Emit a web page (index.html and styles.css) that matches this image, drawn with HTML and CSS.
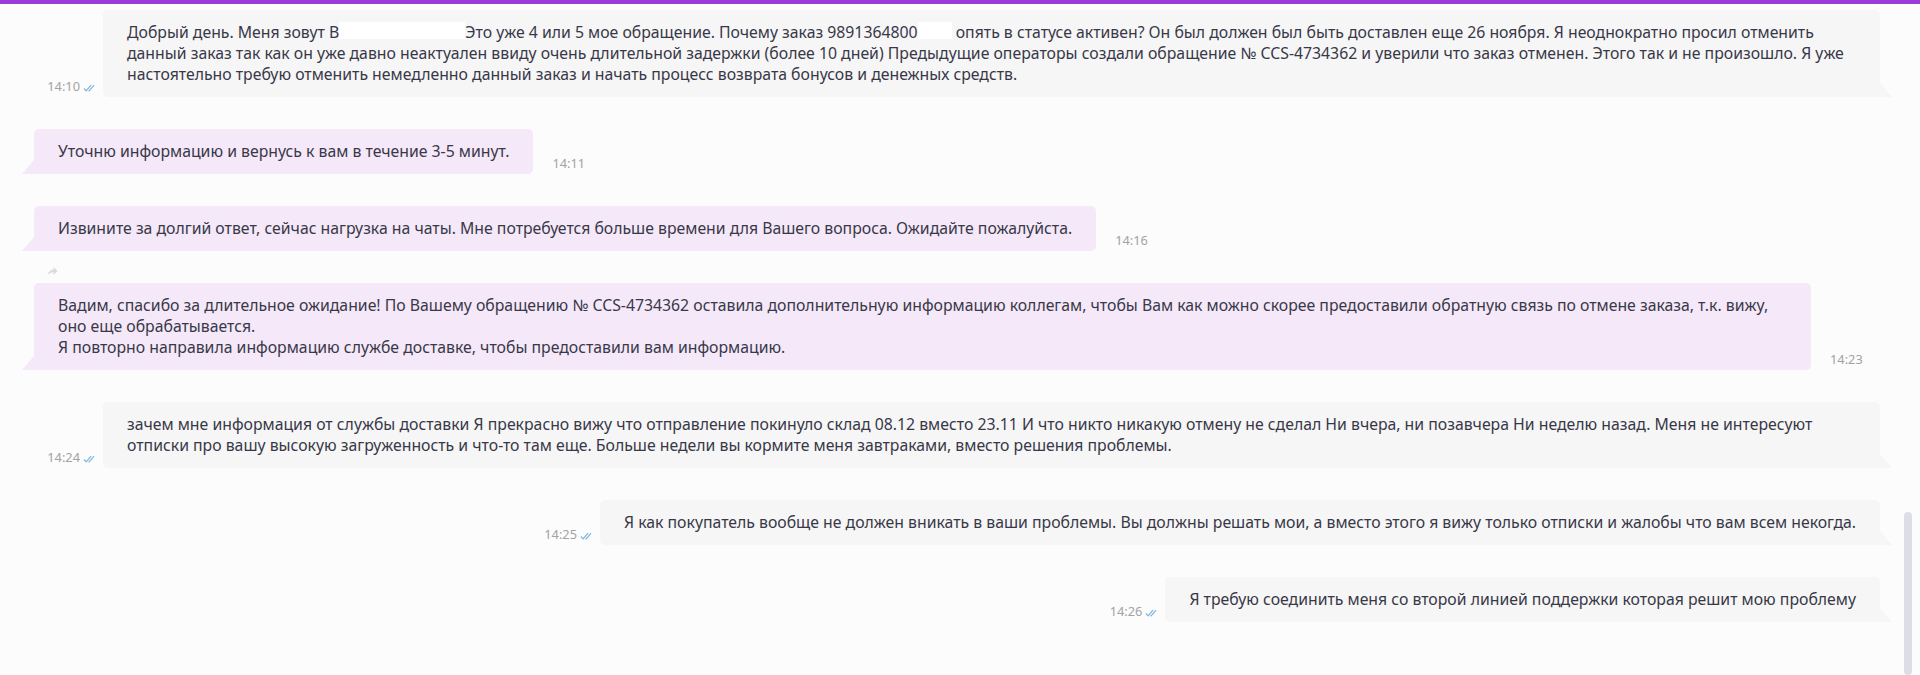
FILE: index.html
```html
<!DOCTYPE html>
<html lang="ru">
<head>
<meta charset="utf-8">
<title>Чат</title>
<link rel="stylesheet" href="styles.css">
</head>
<body>
<div class="topbar"></div>
<div class="chat">
  <div class="msg in">
    <div class="meta"><span class="time">14:10</span><svg class="check" viewBox="0 0 14 8" width="14" height="8"><path d="M1 4.5 L3.2 6.8 L8 1.2 M5.5 6.6 L6.2 6.8 L11 1.2" fill="none" stroke="#7ab6e2" stroke-width="1.2"/></svg></div>
    <div class="bubble wide">Добрый день. Меня зовут В<span class="redact r1"></span>Это уже 4 или 5 мое обращение. Почему заказ 9891364800<span class="redact r2"></span> опять в статусе активен? Он был должен был быть доставлен еще 26 ноября. Я неоднократно просил отменить<br>данный заказ так как он уже давно неактуален ввиду очень длительной задержки (более 10 дней) Предыдущие операторы создали обращение № CCS-4734362 и уверили что заказ отменен. Этого так и не произошло. Я уже<br>настоятельно требую отменить немедленно данный заказ и начать процесс возврата бонусов и денежных средств.</div>
  </div>
  <div class="msg out">
    <div class="bubble">Уточню информацию и вернусь к вам в течение 3-5 минут.</div>
    <div class="meta"><span class="time">14:11</span></div>
  </div>
  <div class="msg out">
    <div class="bubble">Извините за долгий ответ, сейчас нагрузка на чаты. Мне потребуется больше времени для Вашего вопроса. Ожидайте пожалуйста.</div>
    <div class="meta"><span class="time">14:16</span></div>
  </div>
  <div class="msg out">
    <svg class="fwd" viewBox="0 0 10 9" width="11" height="10"><path d="M0.5 8.5 C1 5 3.5 3.3 6 3.3 V0.8 L9.6 4.4 L6 8 V5.6 C3.6 5.6 1.8 6.6 0.5 8.5 Z" fill="#dadada"/></svg>
    <div class="bubble wide">Вадим, спасибо за длительное ожидание! По Вашему обращению № CCS-4734362 оставила дополнительную информацию коллегам, чтобы Вам как можно скорее предоставили обратную связь по отмене заказа, т.к. вижу,<br>оно еще обрабатывается.<br>Я повторно направила информацию службе доставке, чтобы предоставили вам информацию.</div>
    <div class="meta"><span class="time">14:23</span></div>
  </div>
  <div class="msg in">
    <div class="meta"><span class="time">14:24</span><svg class="check" viewBox="0 0 14 8" width="14" height="8"><path d="M1 4.5 L3.2 6.8 L8 1.2 M5.5 6.6 L6.2 6.8 L11 1.2" fill="none" stroke="#7ab6e2" stroke-width="1.2"/></svg></div>
    <div class="bubble wide">зачем мне информация от службы доставки Я прекрасно вижу что отправление покинуло склад 08.12 вместо 23.11 И что никто никакую отмену не сделал Ни вчера, ни позавчера Ни неделю назад. Меня не интересуют<br>отписки про вашу высокую загруженность и что-то там еще. Больше недели вы кормите меня завтраками, вместо решения проблемы.</div>
  </div>
  <div class="msg in">
    <div class="meta"><span class="time">14:25</span><svg class="check" viewBox="0 0 14 8" width="14" height="8"><path d="M1 4.5 L3.2 6.8 L8 1.2 M5.5 6.6 L6.2 6.8 L11 1.2" fill="none" stroke="#7ab6e2" stroke-width="1.2"/></svg></div>
    <div class="bubble">Я как покупатель вообще не должен вникать в ваши проблемы. Вы должны решать мои, а вместо этого я вижу только отписки и жалобы что вам всем некогда.</div>
  </div>
  <div class="msg in">
    <div class="meta"><span class="time">14:26</span><svg class="check" viewBox="0 0 14 8" width="14" height="8"><path d="M1 4.5 L3.2 6.8 L8 1.2 M5.5 6.6 L6.2 6.8 L11 1.2" fill="none" stroke="#7ab6e2" stroke-width="1.2"/></svg></div>
    <div class="bubble">Я требую соединить меня со второй линией поддержки которая решит мою проблему</div>
  </div>
</div>
<div class="scrollbar"></div>
</body>
</html>
```

FILE: styles.css
```css
html, body {
  margin: 0;
  height: 100%;
}
body {
  position: relative;
  overflow: hidden;
  background: #fcfcfc;
  font-family: "Noto Sans", "Open Sans", sans-serif;
  color: #383848;
}
.topbar {
  height: 4px;
  background: #9b3bd9;
}
.chat {
  display: flex;
  flex-direction: column;
  gap: 32px;
  padding: 6px 40px 0 34px;
}
.msg {
  position: relative;
  display: flex;
  align-items: flex-end;
}
.msg.in {
  justify-content: flex-end;
}
.msg.out {
  justify-content: flex-start;
}
.bubble {
  position: relative;
  box-sizing: border-box;
  max-width: 1777px;
  padding: 12px 24px;
  font-size: 15.8px;
  line-height: 21px;
  border-radius: 5px;
  white-space: nowrap;
}
.bubble.wide {
  width: 1777px;
}
.in .bubble {
  background: #f6f6f6;
  border-bottom-right-radius: 0;
}
.out .bubble {
  background: #f5e8f9;
  border-bottom-left-radius: 0;
}
.in .bubble::after {
  content: "";
  position: absolute;
  right: -12px;
  bottom: 0;
  border-left: 12px solid #f6f6f6;
  border-top: 14px solid transparent;
}
.out .bubble::after {
  content: "";
  position: absolute;
  left: -12px;
  bottom: 0;
  border-right: 12px solid #f5e8f9;
  border-top: 14px solid transparent;
}
.meta {
  display: flex;
  align-items: center;
  gap: 3px;
  padding-bottom: 4px;
  font-size: 12.8px;
  line-height: 14px;
  color: #a3a3a3;
}
.in .meta {
  margin-right: 6px;
}
.out .meta {
  margin-left: 19px;
}
.check {
  display: block;
  margin-top: 3px;
}
.redact {
  display: inline-block;
  height: 17px;
  background: #ffffff;
  vertical-align: -1px;
}
.r1 {
  width: 126px;
}
.r2 {
  width: 34px;
}
.fwd {
  position: absolute;
  left: 13px;
  top: -17px;
}
.scrollbar {
  position: absolute;
  right: 8px;
  top: 512px;
  width: 8px;
  height: 163px;
  border-radius: 4px;
  background: #dcdde6;
}
```
